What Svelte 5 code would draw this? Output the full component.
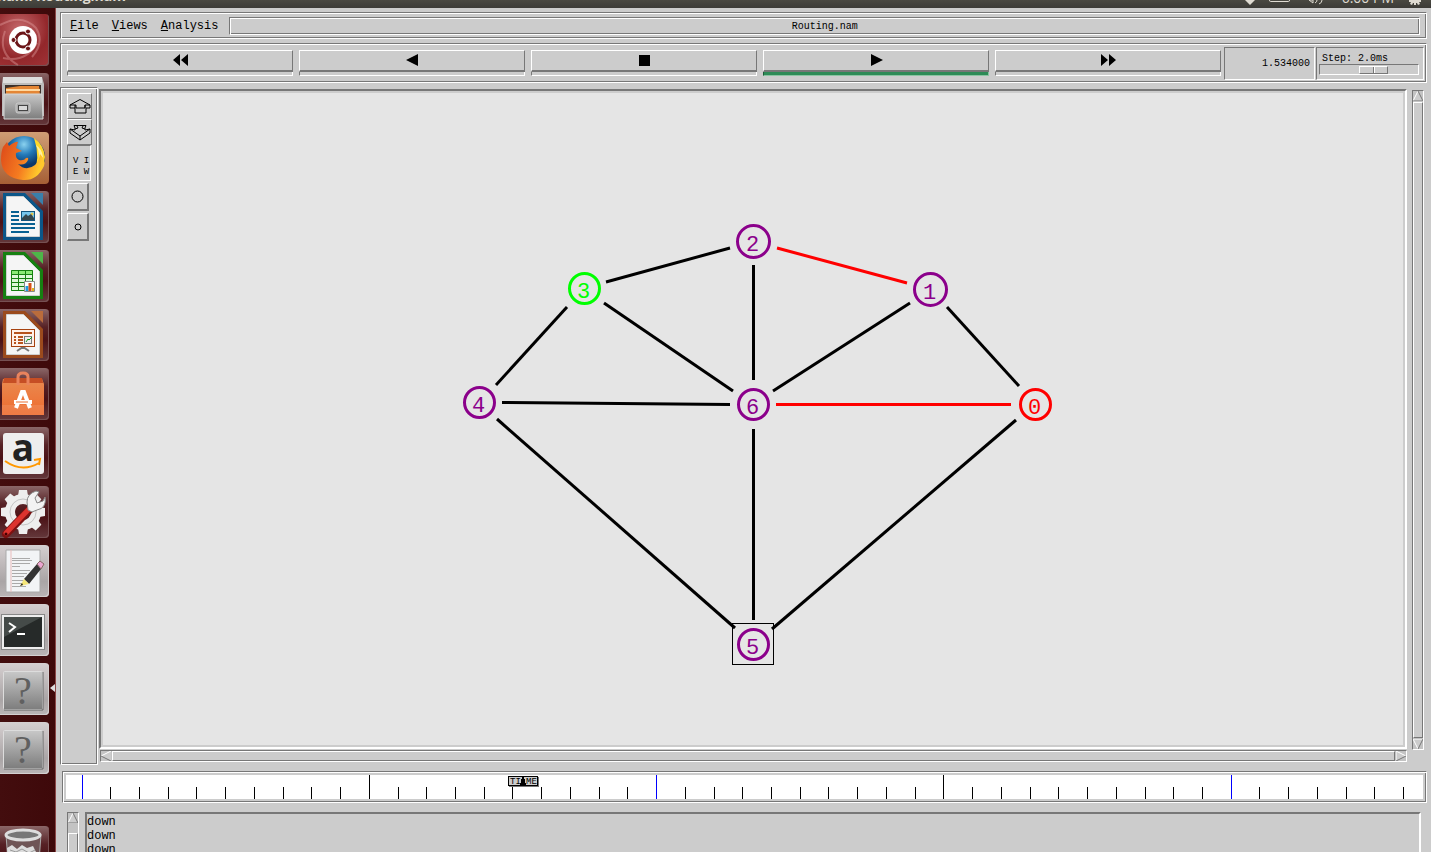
<script>
  const nodes = [
    { id: 0, x: 1035, y: 404, r: 15, color: '#ff0000' },
    { id: 1, x: 930, y: 289, r: 16, color: '#8b008b' },
    { id: 2, x: 753, y: 241, r: 16, color: '#8b008b' },
    { id: 3, x: 584, y: 288, r: 15, color: '#00ff00' },
    { id: 4, x: 479, y: 402, r: 15, color: '#8b008b' },
    { id: 5, x: 753, y: 644, r: 15, color: '#8b008b' },
    { id: 6, x: 753, y: 404, r: 15, color: '#8b008b' }
  ];
  const links = [
    [606, 282, 730, 248], [496, 385, 567, 307], [604, 303, 733, 391],
    [753.5, 265, 753.5, 380], [502, 402.5, 730, 404.5], [773, 391, 910, 303],
    [947, 307, 1019, 386], [497, 419, 735, 628], [753.5, 429, 753.5, 620],
    [1016, 420, 772, 629], [776, 404.5, 1011, 404.5, 1], [777, 248, 907, 283, 1]
  ];
  const ticks = Array.from({ length: 100 }, (_, i) => ({
    x: Math.floor(16 + i * 28.73) + 0.5,
    major: i % 10 === 0,
    blue: i % 20 === 0
  }));
  const transport = [
    { label: 'Rewind', d: 'M8 0v12L1 6zM16 0v12L9 6z' },
    { label: 'Play backward', d: 'M14 0v12L2 6z' },
    { label: 'Stop', d: 'M3 1h11v11H3z' },
    { label: 'Play forward', d: 'M3 0v12l12-6z', active: true },
    { label: 'Fast forward', d: 'M1 0v12l7-6zM9 0v12l7-6z' }
  ];
  const apps = [
    ['dash', 'Dash'], ['files', 'Files'], ['firefox', 'Firefox'], ['writer', 'Writer'],
    ['calc', 'Calc'], ['impress', 'Impress'], ['software', 'Software Center'], ['amazon', 'Amazon'],
    ['settings', 'System Settings'], ['editor', 'Text Editor'], ['terminal', 'Terminal'],
    ['unknown', 'nam'], ['unknown', 'Console']
  ];
  const plain = ['editor', 'terminal', 'unknown'];
</script>

{#snippet page(dark, light)}
  <path d="M3 2h22l18 18v29H3z" fill={dark} />
  <path d="M31 2h12v12z" fill={light} />
  <path d="M6.500 5.500h17l16 16v24h-33z" fill="#f5f5f5" stroke="#cfcfcf" />
{/snippet}

{#snippet icon(name)}
  <svg class="glyph" viewBox="0 0 49 52" aria-hidden="true">
    {#if name === 'dash'}
      <path d="M0 11q22-12 36 3q9 14-4 29M3 44q23 5 34-15M5 17q-8 22 13 34" stroke="#e6a6a6" stroke-opacity=".4" stroke-width="2" fill="none" />
      <circle cx="23" cy="26" r="14" fill="#fff" />
      <circle cx="23" cy="26" r="7" fill="none" stroke="#6b1518" stroke-width="3" />
      <g fill="#6b1518" stroke="#fff" stroke-width="1"><circle cx="13.500" cy="26" r="2.500" /><circle cx="28" cy="17.500" r="2.500" /><circle cx="28" cy="34.500" r="2.500" /></g>
    {:else if name === 'files'}
      <path d="M3 4h39l2 7v32H2V11z" fill="#bdbdbd" /><path d="M3 4h39v6H3z" fill="#dedede" />
      <path d="M5 12h36v10H5z" fill="#3b302b" /><path d="M6 15l14-2h19l1 9H6z" fill="#e48635" /><path d="M6 17h34" stroke="#ffd8a0" stroke-width="2" />
      <path d="M4 21h38l1 25H4z" fill="url(#metal)" stroke="#d5d5d5" />
      <rect x="16" y="30" width="14" height="10" rx="2" fill="#aaa" stroke="#ccc" /><rect x="18.500" y="32.500" width="9" height="5" fill="#d8d8d8" stroke="#444" />
    {:else if name === 'firefox'}
      <circle cx="24" cy="25" r="21" fill="url(#globe)" />
      <path d="M34 6q10 7 11 19-1 12-12 20 8-19 1-39z" fill="#ffd829" />
      <path d="M36 13q5 9 2 20l5-8q-1-8-7-12z" fill="#fff0a0" />
      <path d="M3 15l4-5 2 4q7-5 9-4l-2 6 6 3-6 2q-1 5 3 7 5 1 7-2 3-1 2 2-3 6-10 4 8 8 17 1 4-4 5-11 6 6 4 12-7 15-21 14Q2 46 1 28 1 20 3 15z" fill="url(#fox)" />
    {:else if name === 'writer'}
      {@render page('#0b5689', '#397fab')}
      <path d="M11 21h8M11 25h8M11 29h8M11 33h24M11 37h24M11 41h18" stroke="#086192" stroke-width="2" />
      <rect x="21.500" y="20.500" width="13" height="9" fill="#77c6ec" stroke="#12557e" /><circle cx="32" cy="23" r="1.500" fill="#e9c646" /><path d="M22 29v-2l4-4 2 2 3-2 3 4v2z" fill="#36464c" />
    {:else if name === 'calc'}
      {@render page('#168011', '#4eb649')}
      <path d="M11 20h22v21H11z" fill="#8bea76" /><path d="M12 25h20v15H12z" fill="#ddf7d8" />
      <path d="M11.500 20.500h21v20h-21zM11 24.500h22M11 28.500h22M11 32.500h22M11 36.500h22M18.500 20v21M25.500 20v21" fill="none" stroke="#168011" />
      <path d="M24.500 31.500h10v10h-10z" fill="#fff" stroke="#888" /><path d="M27 41v-5" stroke="#249ae0" stroke-width="3" /><path d="M30 41v-8" stroke="#d65116" stroke-width="3" /><path d="M33 41v-3" stroke="#e7b216" stroke-width="2" />
    {:else if name === 'impress'}
      {@render page('#9b4a1d', '#ba6c3c')}
      <path d="M17 42l6-4 6 4M23 36v4" stroke="#777" stroke-width="2" fill="none" /><rect x="11.500" y="20.500" width="23" height="17" fill="#fff0e8" stroke="#a64210" />
      <path d="M14 24h18M14 28h2M18 28h5M14 31h2M18 31h5M14 34h2M18 34h5" stroke="#b7531d" stroke-width="2" /><rect x="24.500" y="27.500" width="7" height="7" fill="#eee" stroke="#777" /><path d="M26 33l2-3 1 1 3-3" stroke="#17981d" fill="none" />
    {:else if name === 'software'}
      <path d="M3 11h39l2 5v31H2V16z" fill="url(#bag)" /><path d="M4 10h38l1 5H3z" fill="#c64e24" /><path d="M2 37h42v10H2z" fill="#fff" fill-opacity=".1" />
      <path d="M18 17V9q0-4 5-4t5 4v8" fill="none" stroke="#e9835d" stroke-width="3" />
      <path d="M16 40l6-16h2l6 16" fill="none" stroke="#fff" stroke-width="4" /><path d="M14 34h18" stroke="#fff" stroke-width="4" /><path d="M16 34h12" stroke="#eb7134" />
    {:else if name === 'amazon'}
      <rect x="3" y="6" width="41" height="41" rx="3" fill="#eee" /><text x="23" y="34" text-anchor="middle" class="amazon">a</text>
      <path d="M5 34q17 12 34 2M34 33l6-1-1 6" fill="none" stroke="#ff9800" stroke-width="2" />
    {:else if name === 'settings'}
      <g transform="translate(23 26)"><circle r="13" fill="none" stroke="#eee" stroke-width="10" />{#each [0, 45, 90, 135, 180, 225, 270, 315] as a}<path d="M-5-16l1-6h8l1 6z" fill="#eee" transform="rotate({a})" />{/each}<circle r="13" fill="none" stroke="#c5c5c5" /></g>
      <path d="M6 48L31 22" stroke="#7d1111" stroke-width="8" stroke-linecap="round" /><path d="M6 47L30 22" stroke="#dc332e" stroke-width="5" stroke-linecap="round" />
      <path d="M28 24l-1-8q0-8 9-11l3 1-4 6 2 5 6-2 2-4q2 11-8 13l-5 2z" fill="#f3f3f3" stroke="#888" /><circle cx="6" cy="48" r="1.500" fill="#400" />
    {:else if name === 'editor'}
      <path d="M6 5h34v42H6z" fill="#f2f4f6" stroke="#aaa" /><path d="M11 5v42" stroke="#e9bcbc" /><path d="M12 13.500h18M12 15.500h20M12 18.500h18M12 21.500h8M12 25.500h18M12 28.500h15M12 31.500h12M12 35.500h15M12 38.500h12M12 41.500h14" stroke="#aaa" />
      <path d="M24 34l5 5 12-15-4-5z" fill="#333" /><path d="M37 19l3-3 4 3-3 5z" fill="#eba6d2" stroke="#866" /><path d="M20 41l4-7 5 5z" fill="#f5e678" /><path d="M20 41l2-3 1 2z" fill="#222" />
    {:else if name === 'terminal'}
      <rect x="1.500" y="10.500" width="43" height="35" fill="#eee" stroke="#888" /><path d="M4 13h38v30H4z" fill="#262a29" /><path d="M4 13h38L4 33z" fill="#454b49" /><path d="M9 19l6 4-6 5M17 30h8" stroke="#fff" stroke-width="2" fill="none" />
    {:else if name === 'unknown'}
      <rect x="3.500" y="8.500" width="39" height="38" rx="1" fill="url(#metal)" stroke="#ddd" /><path d="M4 47h39V9" fill="none" stroke="#666" /><text x="23" y="41" text-anchor="middle" class="question">?</text>
    {:else}
      <path d="M6 8l3 42h29l3-42z" fill="#6f5556" stroke="#aaa" /><path d="M7 22l5-3 5 4 5-4 5 3 6-2 4 8v24H9z" fill="#ddd" /><path d="M10 24l6 2 6-3 7 4 6-3" stroke="#999" fill="none" />
      <ellipse cx="23" cy="9" rx="17" ry="5" fill="#777" stroke="#ddd" stroke-width="3" />
    {/if}
  </svg>
{/snippet}

<svg class="defs" aria-hidden="true">
  <defs>
    <linearGradient id="metal" x2="0" y2="1"><stop stop-color="#c8c8c8" /><stop offset="1" stop-color="#7d7d7d" /></linearGradient>
    <linearGradient id="bag" x2="0" y2="1"><stop stop-color="#e98a50" /><stop offset="1" stop-color="#ef6b2f" /></linearGradient>
    <radialGradient id="globe" cy=".2"><stop stop-color="#8ad2ef" /><stop offset=".5" stop-color="#2379b8" /><stop offset="1" stop-color="#0d3769" /></radialGradient>
    <linearGradient id="fox" x2="1" y2=".3"><stop stop-color="#dc4819" /><stop offset=".6" stop-color="#f57b20" /><stop offset="1" stop-color="#ffc82c" /></linearGradient>
  </defs>
</svg>

<div class="desktop">
  <header class="panel">
    <span>nam: Routing.nam</span>
    <div class="tray">
      <svg width="84" height="16" viewBox="0 0 84 16" fill="#dfdbd2" aria-hidden="true">
        <path d="M5 0h10l-5 5z" /><path d="M29.500 0q0 1.500 1 1.500h18q1 0 1-1.500" fill="none" stroke="#dfdbd2" />
        <path d="M69 0h4v3zM75 3q2-1 2-3M79 4q3-1 3-4" stroke="#dfdbd2" fill="none" />
      </svg>
      <span>6:00 PM</span>
      <svg width="14" height="16" viewBox="0 0 14 16" fill="#dfdbd2" aria-hidden="true"><path d="M1 0h12v2h-2l1 2-2 1-1-2H8v2H6V3H5L4 5 2 4l1-2H1z" /></svg>
    </div>
  </header>
  <div class="workspace">
    <nav class="launcher" aria-label="Launcher">
      {#each apps as [name, label], i}
        <button class="tile {name}" class:plain={plain.includes(name)} class:running={i === 11} aria-label={label}>{@render icon(name)}</button>
      {/each}
      <button class="tile trash" aria-label="Trash">{@render icon('trash')}</button>
    </nav>

    <main>
      <div class="menubar groove">
        <button><u>F</u>ile</button><button><u>V</u>iews</button><button><u>A</u>nalysis</button>
        <div class="filename groove">Routing.nam</div>
      </div>

      <div class="toolbar groove">
        <div class="transport">
          {#each transport as b}
            <button class:active={b.active} aria-label={b.label}>
              <span><svg width="17" height="13" aria-hidden="true"><path d={b.d} /></svg></span><i></i>
            </button>
          {/each}
        </div>
        <div class="time sunken">1.534000</div>
        <div class="step sunken"><label for="step">Step: 2.0ms</label><input id="step" type="range" min="0" max="100" value="56" /></div>
      </div>

      <div class="middle">
        <div class="tools groove">
          <button class="flat" aria-label="Zoom in"><svg width="22" height="18" viewBox="0 0 22 18"><path d="M11 2.500L21 8v3h-4v5H6v-5H1V8zM1 8h6v3h9V8h5M6 11v-3M16 11V8" /></svg></button>
          <button class="flat" aria-label="Zoom out"><svg width="22" height="18" viewBox="0 0 22 18"><path d="M1 6l5 1V5L5 2.500h12L16 5v2l5-1v4l-10 7L1 10zM1 6l10 7 10-7M6 6l3-1-1-2M16 6l-3-1 1-2M11 13v4" /></svg></button>
          <button class="view" aria-label="View"><span>V I</span><span>E W</span></button>
          <button class="raised" aria-label="Larger nodes"><svg width="14" height="14"><circle cx="6.500" cy="6.500" r="5.500" /></svg></button>
          <button class="raised" aria-label="Smaller nodes"><svg width="14" height="14"><circle cx="7" cy="7" r="3" /></svg></button>
        </div>
        <div class="stage">
          <div class="canvas">
            <svg viewBox="103 93 1300 652" role="img" aria-label="Network topology">
              {#each links as l}
                <line x1={l[0]} y1={l[1]} x2={l[2]} y2={l[3]} stroke={l[4] ? '#ff0000' : '#000'} stroke-width="3" />
              {/each}
              <rect x="732.500" y="623.500" width="41" height="41" fill="none" stroke="#000" />
              {#each nodes as n}
                <circle cx={n.x + 0.5} cy={n.y + 0.5} r={n.r} fill="none" stroke={n.color} stroke-width="3" />
                <text x={n.x - 0.5} y={n.y + 10} fill={n.color} text-anchor="middle">{n.id}</text>
              {/each}
            </svg>
          </div>
          <div class="hscroll scroll">
            <svg width="10" height="10"><path d="M10 0v10L0 5z" fill="#ccc" /><path d="M10 0L0 5" stroke="#fff" /><path d="M0 5l10 5" stroke="#777" /></svg>
            <b></b>
            <svg width="10" height="10"><path d="M0 0v10l10-5z" fill="#ccc" /><path d="M0 10V0l10 5" stroke="#fff" fill="none" /><path d="M10 5L0 10" stroke="#777" /></svg>
          </div>
        </div>
        <div class="vscroll scroll">
          <svg width="10" height="10"><path d="M0 10h10L5 0z" fill="#ccc" /><path d="M0 10L5 0" stroke="#fff" /><path d="M5 0l5 10H0" stroke="#777" fill="none" /></svg>
          <b></b>
          <svg width="10" height="10"><path d="M0 0h10L5 10z" fill="#ccc" /><path d="M10 0H0l5 10" stroke="#fff" fill="none" /><path d="M5 10l5-10" stroke="#777" /></svg>
        </div>
      </div>

      <div class="timeline groove">
        <svg width="100%" height="24" shape-rendering="crispEdges" aria-label="Timeline">
          {#each ticks as t}
            <line x1={t.x} x2={t.x} y1={t.major ? 0 : 12} y2="24" stroke={t.blue ? '#0000ff' : '#000'} />
          {/each}
          <rect x="443" y="2" width="30" height="10" fill="#777" />
          <rect x="442.500" y="1.500" width="29" height="9" fill="#ccc" stroke="#000" />
          <text x="444" y="9">TI</text><text x="460" y="9">ME</text>
          <path d="M456 1h2v3h1v4h1v3h-6V8h1V4h1z" />
        </svg>
      </div>

      <div class="console">
        <div class="cscroll scroll">
          <svg width="10" height="10"><path d="M0 10h10L5 0z" fill="#ccc" /><path d="M0 10L5 0" stroke="#fff" /><path d="M5 0l5 10H0" stroke="#777" fill="none" /></svg>
          <b></b>
        </div>
        <div class="log"><div>down</div><div>down</div><div>down</div></div>
      </div>
    </main>
  </div>
</div>

<style>
  :global(body) { margin: 0; background: #ccc; }
  * { box-sizing: border-box; }
  button { margin: 0; padding: 0; border: 0; background: #ccc; color: #000; font: inherit; }
  svg { display: block; }
  .defs { position: absolute; width: 0; height: 0; }
  .desktop { height: 100vh; display: flex; flex-direction: column; overflow: hidden; font: 12px "Liberation Mono", monospace; color: #000; }
  .panel { flex: none; height: 8px; overflow: hidden; display: flex; align-items: flex-end; justify-content: space-between; background: linear-gradient(#494841, #3c3b37); color: #dfdbd2; font: bold 14px/16px "Open Sans", sans-serif; }
  .panel span { margin: 0 0 4px -3px; }
  .tray { flex: none; display: flex; align-items: flex-end; margin-right: 9px; }
  .tray svg { margin-bottom: -8px; }
  .panel .tray span { margin: 0 14px 2px 18px; font: 14px/16px "Open Sans", sans-serif; }
  .workspace { flex: 1; min-height: 0; display: flex; }

  .launcher { flex: none; width: 56px; padding-top: 6px; display: flex; flex-direction: column; gap: 7px; overflow: hidden; background: linear-gradient(90deg, #430d0e, #3e090a); border-right: 1px solid #8c4747; }
  .tile { flex: none; position: relative; width: 49px; height: 52px; border-radius: 0 4px 4px 0; background: linear-gradient(#8b6768, #562125 35%, #4b1216 60%, #64383b); box-shadow: inset -1px -1px #765052; }
  .tile.dash { background: radial-gradient(circle at 40% 30%, #c66a6c, #93272b 60%, #a03336); }
  .tile.firefox { background: linear-gradient(#cf9d75, #a65f35); box-shadow: none; }
  .tile.plain { background: linear-gradient(#d5cfd0, #aaa5a6 70%, #bab5b6); box-shadow: inset -1px -1px #d4d0d1; }
  .tile.trash { margin-top: 45px; }
  .tile.running::after { content: ""; position: absolute; left: 50px; top: 21px; border: solid transparent; border-width: 4px 5px 4px 0; border-right-color: #ddd; }
  .glyph { width: 49px; height: 52px; overflow: visible; }
  .amazon { font: bold 37px "Open Sans", sans-serif; fill: #222; }
  .question { font: 40px "Liberation Serif", serif; fill: #606060; }

  main { flex: 1; min-width: 0; padding: 4px 4px 0; display: flex; flex-direction: column; }
  .groove { border: 1px solid; border-color: #777 #fff #fff #777; box-shadow: inset 1px 1px #fff, inset -1px -1px #777; }
  .sunken { border: 1px solid; border-color: #777 #fff #fff #777; }
  .menubar { flex: none; height: 27px; padding: 4px 6px 4px 9px; display: flex; align-items: center; gap: 13px; }
  .menubar button { line-height: 16px; }
  .filename { flex: 1; height: 18px; margin-left: -2px; text-align: center; font-size: 10px; line-height: 17px; }
  .toolbar { flex: none; height: 40px; margin-top: 4px; padding: 3px 2px 2px 6px; display: flex; gap: 1px; }
  .transport { flex: 1; display: flex; gap: 6px; padding: 3px 2px 0 0; }
  .transport button { flex: 1; height: 26px; display: flex; flex-direction: column; }
  .transport span { height: 22px; width: 100%; display: grid; place-items: center; border: solid; border-width: 1px 1px 2px; border-color: #fff #777 #777 #fff; }
  .transport i { height: 4px; width: 100%; border: solid; border-width: 0 1px 1px; border-color: #fff #fff #fff #777; }
  .transport .active i { background: #2e8b57; border-color: #777 #8bc4a2 #8bc4a2 #1d5a38; }
  .time { width: 91px; height: 33px; padding-right: 4px; text-align: right; font-size: 10px; line-height: 31px; }
  .step { width: 108px; height: 33px; padding: 5px 4px 0 2px; font-size: 10px; line-height: 11px; display: flex; flex-direction: column; }
  .step label { padding-left: 3px; }
  .step input { appearance: none; width: 100%; height: 11px; margin: 0; background: #ccc; border: 1px solid; border-color: #777 #fff #fff #777; }
  .step input::-webkit-slider-thumb { appearance: none; width: 29px; height: 8px; background: linear-gradient(90deg, #ccc 13px, #777 13px 14px, #fff 14px 15px, #ccc 15px); border: 1px solid; border-color: #fff #777 #777 #fff; }

  .middle { flex: 1; min-height: 0; margin-top: 4px; display: flex; }
  .tools { width: 38px; padding: 5px 4px 5px 6px; display: flex; flex-direction: column; align-items: flex-start; }
  .tools svg { fill: none; stroke: #000; }
  .flat { width: 25px; height: 26px; display: grid; place-items: center; border: 1px solid; border-color: #fff #777 #777 #fff; }
  .view { width: 24px; height: 36px; margin-bottom: 1px; padding: 8px 0 0 5px; border: 1px solid; border-color: #777 #fff #fff #777; font-size: 9px; line-height: 11px; text-align: left; }
  .view span { display: block; white-space: pre; }
  .raised { width: 22px; height: 28px; margin: 1px 0; display: grid; place-items: center; border: solid; border-width: 1px 2px 2px 1px; border-color: #fff #777 #777 #fff; }
  .stage { flex: 1; min-width: 0; margin: 2px 5px 3px 1px; display: flex; flex-direction: column; }
  .canvas { flex: 1; min-height: 0; border: 2px solid; border-color: #777 #fff #fff #777; outline: 2px solid #ccc; outline-offset: -4px; background: #e5e5e5; padding: 2px; }
  .canvas svg { width: 100%; height: 100%; }
  .canvas text { font: 22px "Liberation Mono", monospace; }
  .scroll { border: 1px solid; border-color: #777 #fff #fff #777; background: #c3c3c3; display: flex; }
  .scroll svg { flex: none; fill: none; }
  .scroll b { flex: 1; background: #ccc; border: 1px solid; border-color: #fff #777 #777 #fff; }
  .hscroll { flex: none; height: 12px; margin: 1px 0 0 1px; gap: 1px; }
  .vscroll { width: 12px; margin: 3px 3px 15px 0; flex-direction: column; gap: 1px; }
  .timeline { flex: none; height: 32px; margin: 6px 0 0 2px; padding: 3px; }
  .timeline svg { background: #fff; }
  .timeline text { font: 9px "Liberation Mono", monospace; }
  .console { flex: none; height: 49px; padding: 9px 6px 0 7px; display: flex; gap: 6px; }
  .cscroll { width: 12px; border-bottom: 0; flex-direction: column; gap: 10px; }
  .cscroll b { border-bottom: 0; }
  .log { flex: 1; overflow: hidden; border: 2px solid; border-color: #777 #fff #fff #777; border-bottom: 0; line-height: 14px; padding-top: 1px; }
</style>
